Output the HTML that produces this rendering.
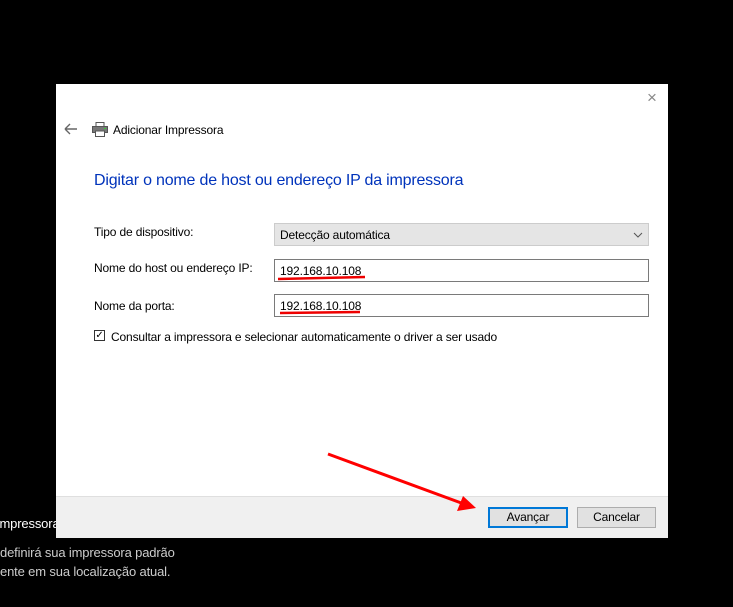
<!DOCTYPE html>
<html><head><meta charset="utf-8"><style>
body{margin:0;width:733px;height:607px;background:#000;position:relative;overflow:hidden;font-family:"Liberation Sans",sans-serif;font-size:12px;letter-spacing:-0.15px;color:#000}
.a{position:absolute;white-space:nowrap}
#dlg{position:absolute;left:56px;top:84px;width:612px;height:453px;background:#fff}
#foot{position:absolute;left:0;top:412px;width:612px;height:41px;background:#f0f0f0;border-top:1px solid #dfdfdf}
.box{position:absolute;border:1px solid #7a7a7a;background:#fff;box-sizing:border-box;padding-left:5px}
.btn{position:absolute;top:10px;height:21px;box-sizing:border-box;background:#e1e1e1;border:1px solid #adadad;text-align:center;line-height:19px}
</style></head><body>
<div class="a" style="left:-4px;top:516px;color:#fff;font-size:13px">Impressora</div>
<div class="a" style="left:0;top:545px;color:#ccc;font-size:13px">definirá sua impressora padrão</div>
<div class="a" style="left:0;top:564px;color:#ccc;font-size:13px">ente em sua localização atual.</div>
<div id="dlg">
<div class="a" style="left:591px;top:4px;color:#888;font-size:17px">×</div>
<svg class="a" style="left:8px;top:39px" width="14" height="12"><path d="M1 6H13M1 6L6 1M1 6L6 11" stroke="#666" stroke-width="1.4" fill="none"/></svg>
<svg class="a" style="left:36px;top:38px" width="16" height="15"><rect x="4" y="0.5" width="8" height="4" fill="#fff" stroke="#555"/><rect x="0.5" y="4.5" width="15" height="6" fill="#777" stroke="#555"/><rect x="3.5" y="9" width="9" height="5.5" fill="#fff" stroke="#555"/><rect x="12" y="6" width="2" height="1" fill="#3c3"/></svg>
<div class="a" style="left:57px;top:39px">Adicionar Impressora</div>
<div class="a" style="left:38px;top:88px;color:#0033bb;font-size:16px;letter-spacing:-0.2px">Digitar o nome de host ou endereço IP da impressora</div>
<div class="a" style="left:38px;top:141px">Tipo de dispositivo:</div>
<div class="a" style="left:38px;top:177px">Nome do host ou endereço IP:</div>
<div class="a" style="left:38px;top:215px">Nome da porta:</div>
<div class="box" style="left:218px;top:139px;width:375px;background:#e5e5e5;border-color:#ccc;height:23px;line-height:22px">Detecção automática<svg style="position:absolute;right:5px;top:8px" width="10" height="6"><path d="M1 1L5 5L9 1" stroke="#555" fill="none"/></svg></div>
<div class="box" style="left:218px;top:175px;width:375px;height:23px;line-height:22px">192.168.10.108</div>
<div class="box" style="left:218px;top:210px;width:375px;height:23px;line-height:22px">192.168.10.108</div>
<div class="a" style="left:38px;top:246px;width:11px;height:11px;border:1px solid #333;box-sizing:border-box;font-size:10px;line-height:9px;text-align:center">✓</div>
<div class="a" style="left:55px;top:246px">Consultar a impressora e selecionar automaticamente o driver a ser usado</div>
<div id="foot">
<div class="btn" style="left:432px;width:80px;border:2px solid #0078d7;line-height:17px">Avançar</div>
<div class="btn" style="left:521px;width:79px">Cancelar</div>
</div>
<svg class="a" style="left:0;top:0" width="612" height="453"><path d="M222 195L309 193" stroke="#e00" stroke-width="2.5" fill="none"/><path d="M224 229L304 228" stroke="#e00" stroke-width="2.5" fill="none"/>
<path d="M272 370L408 420" stroke="#f00" stroke-width="3"/><path d="M420 424L401 427L407 412Z" fill="#f00"/></svg>
</div>
</body></html>
